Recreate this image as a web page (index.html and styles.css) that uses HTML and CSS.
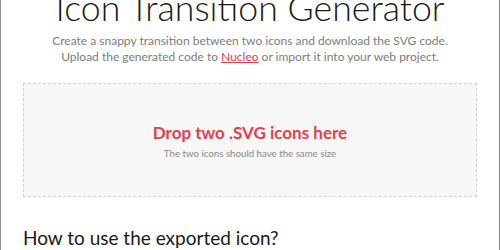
FILE: index.html
```html
<!DOCTYPE html>
<html>
<head>
<meta charset="utf-8">
<link rel="stylesheet" href="styles.css">
</head>
<body>
<div class="page">
  <header class="intro">
    <h1 class="title">Icon Transition Generator</h1>
    <p class="lead">Create a snappy transition between two icons and download the SVG code.<br>Upload the generated code to <a class="link" href="#">Nucleo</a> or import it into your web project.</p>
  </header>
  <div class="dropzone">
    <div class="drop-title">Drop two .SVG icons here</div>
    <div class="drop-hint">The two icons should have the same size</div>
  </div>
  <h2 class="section-title">How to use the exported icon?</h2>
</div>
</body>
</html>
```

FILE: styles.css
```css
html, body {
  margin: 0;
  padding: 0;
  background: #fff;
  height: 100%;
  overflow: hidden;
}
.page {
  box-sizing: border-box;
  width: 500px;
  height: 250px;
  border-left: 1px solid #8c8c8c;
  border-right: 1px solid #8c8c8c;
  padding: 0 22px;
  overflow: hidden;
}
.intro {
  text-align: center;
  white-space: nowrap;
}
.title {
  margin: -12px 0 0;
  font-family: "Lato", sans-serif;
  font-weight: 300;
  font-size: 35.7px;
  line-height: 40px;
  color: #1a1a1a;
}
.lead {
  margin: 5px 0 0;
  font-family: "Lato", sans-serif;
  font-size: 12px;
  line-height: 16px;
  color: #7d7d7d;
}
.link {
  color: #e5404c;
  text-decoration: underline;
}
.dropzone {
  margin-top: 18px;
  height: 114px;
  box-sizing: border-box;
  border: 1px dashed #d2d2d2;
  background: #f7f7f7;
  display: flex;
  flex-direction: column;
  align-items: center;
  justify-content: center;
  gap: 3px;
}
.drop-title {
  font-family: "Lato", sans-serif;
  font-weight: 700;
  font-size: 17px;
  line-height: 22px;
  color: #e5404c;
}
.drop-hint {
  font-family: "Lato", sans-serif;
  font-size: 9.7px;
  line-height: 12px;
  color: #888;
}
.section-title {
  margin: 29px 0 0;
  font-family: "Lato", sans-serif;
  font-weight: 400;
  font-size: 19px;
  line-height: 24px;
  color: #1a1a1a;
}
```
